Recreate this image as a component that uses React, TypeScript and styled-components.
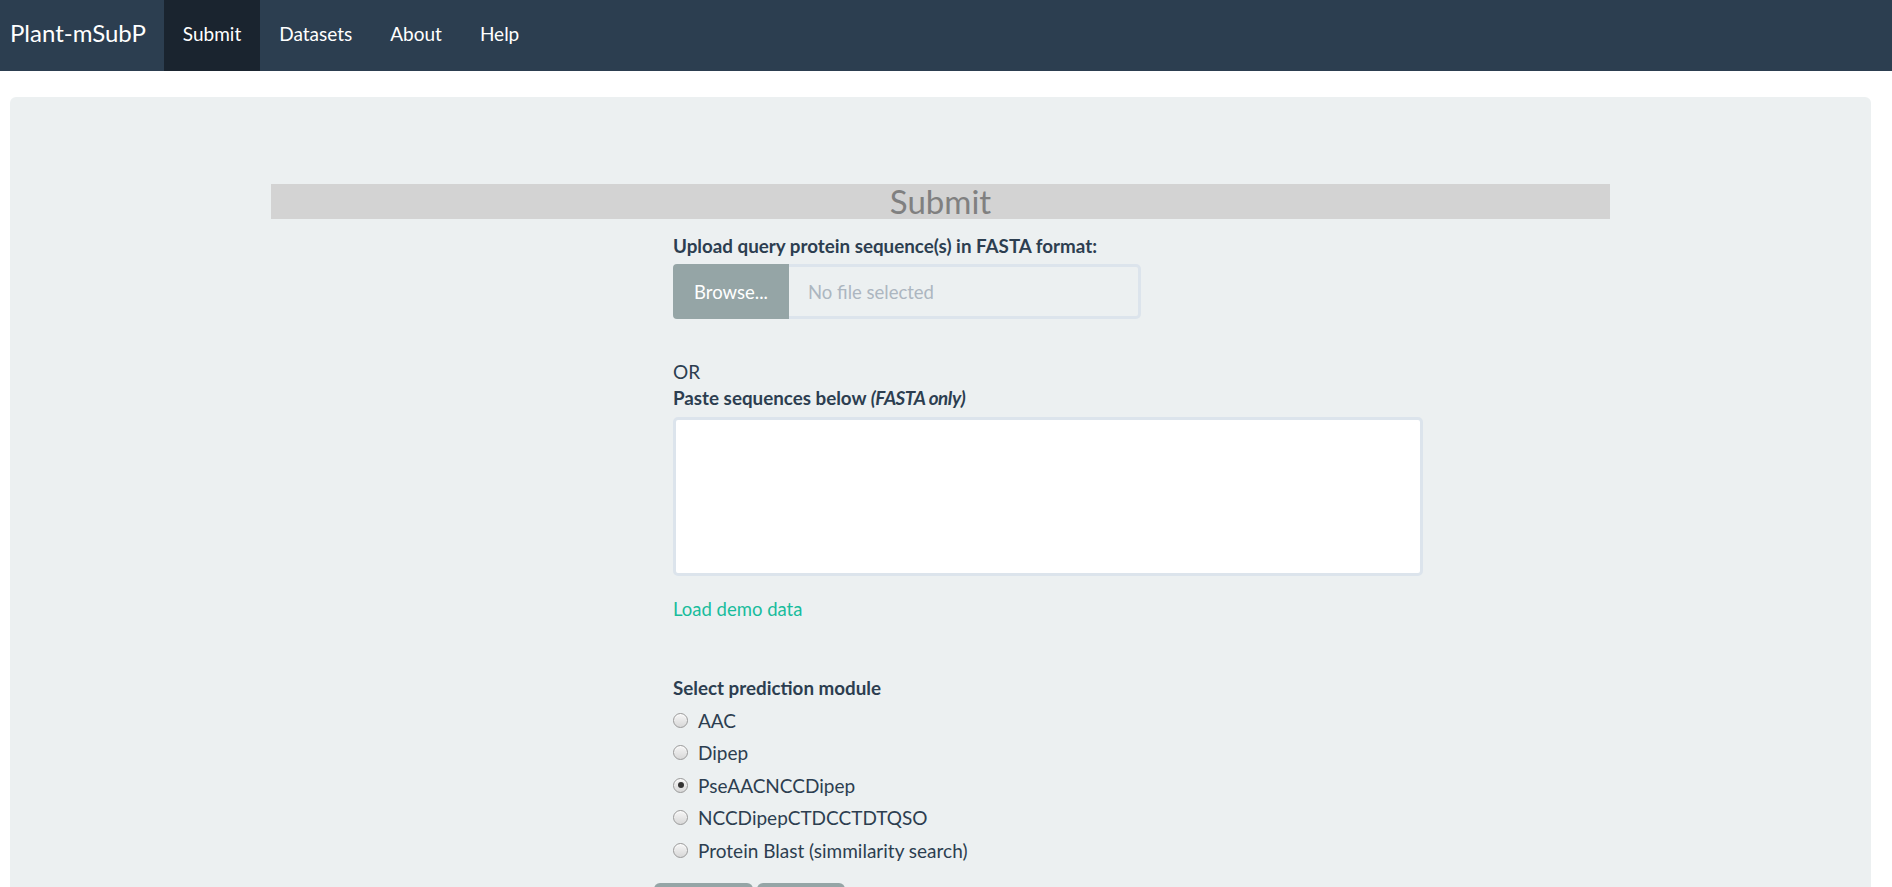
import React from "react";
import styled, { createGlobalStyle } from "styled-components";

const Global = createGlobalStyle`
  html, body { margin: 0; padding: 0; overflow: hidden; }
  body {
    background: #ffffff;
    font-family: Lato, "Open Sans", "Liberation Sans", sans-serif;
    color: #2c3e50;
    font-size: 19px;
  }
  * { box-sizing: border-box; }
`;

const NavBar = styled.nav`
  display: flex;
  align-items: stretch;
  height: 71px;
  background: #2c3e50;
`;

const Brand = styled.a`
  display: flex;
  align-items: center;
  padding: 0 18px 6px 10px;
  color: #ffffff;
  font-size: 24px;
  text-decoration: none;
`;

const NavLink = styled.a<{ $active?: boolean }>`
  display: flex;
  align-items: center;
  padding: 0 19px 4px;
  color: #ffffff;
  font-size: 19px;
  text-decoration: none;
  background: ${(p) => (p.$active ? "#1a242f" : "transparent")};
`;

const Panel = styled.main`
  margin: 26px 21px 0 10px;
  background: #ecf0f1;
  border-radius: 6px;
  padding-top: 87px;
  min-height: 900px;
`;

const Content = styled.div`
  width: 1339px;
  margin: 0 auto;
`;

const TitleBar = styled.h2`
  margin: 0;
  height: 35px;
  background: #d3d3d3;
  color: #808080;
  font-weight: 400;
  font-size: 33px;
  line-height: 35px;
  text-align: center;
`;

const Form = styled.div`
  margin-left: 402px;
  display: flex;
  flex-direction: column;
  align-items: flex-start;
`;

const Label = styled.label<{ $mt?: number }>`
  display: block;
  font-weight: 700;
  font-size: 18.8px;
  line-height: 26px;
  margin-top: ${(p) => p.$mt ?? 0}px;
`;

const Emphasis = styled.i`
  letter-spacing: -0.4px;
`;

const FileRow = styled.div`
  display: flex;
  margin-top: 5px;
  height: 55px;
  width: 468px;
`;

const BrowseButton = styled.span`
  display: flex;
  align-items: center;
  justify-content: center;
  width: 116px;
  background: #95a5a6;
  color: #ffffff;
  font-size: 18.5px;
  border-radius: 4px 0 0 4px;
`;

const FileName = styled.div`
  flex: 1;
  display: flex;
  align-items: center;
  padding-left: 19px;
  border: 3px solid #dce4ec;
  border-left: none;
  border-radius: 0 5px 5px 0;
  background: #ecf0f1;
  color: #acb6c0;
  font-size: 18.5px;
`;

const Plain = styled.div<{ $mt?: number }>`
  font-size: 19px;
  line-height: 26px;
  margin-top: ${(p) => p.$mt ?? 0}px;
`;

const TextArea = styled.textarea`
  margin-top: 6px;
  width: 750px;
  height: 159px;
  border: 3px solid #dce4ec;
  border-radius: 5px;
  background: #ffffff;
  resize: none;
  outline: none;
  font-family: inherit;
`;

const DemoLink = styled.a`
  margin-top: 20px;
  color: #18bc9c;
  font-size: 18.5px;
  line-height: 26px;
  text-decoration: none;
`;

const RadioList = styled.div`
  display: flex;
  flex-direction: column;
  margin-top: 3px;
`;

const RadioRow = styled.label`
  display: flex;
  align-items: center;
  height: 32.5px;
  font-size: 19px;
  gap: 10px;
`;

const RadioDot = styled.span<{ $checked?: boolean }>`
  position: relative;
  width: 15px;
  height: 15px;
  border-radius: 50%;
  border: 1px solid #9a9a9a;
  background: linear-gradient(#f6f6f6, #d8d8d8);
  box-shadow: inset 0 1px 1px rgba(255, 255, 255, 0.8);
  &::after {
    content: "";
    display: ${(p) => (p.$checked ? "block" : "none")};
    position: absolute;
    left: 3.5px;
    top: 3.5px;
    width: 6px;
    height: 6px;
    border-radius: 50%;
    background: #333;
  }
`;

const ButtonRow = styled.div`
  display: flex;
  gap: 4px;
  margin-top: 16px;
  margin-left: -19px;
`;

const ActionButton = styled.button<{ $w: number }>`
  width: ${(p) => p.$w}px;
  height: 46px;
  border: none;
  border-radius: 6px;
  background: #95a5a6;
  color: #ffffff;
  font-family: inherit;
  font-size: 18px;
  padding-top: 12px;
`;

const modules = [
  "AAC",
  "Dipep",
  "PseAACNCCDipep",
  "NCCDipepCTDCCTDTQSO",
  "Protein Blast (simmilarity search)",
];

export default function App() {
  return (
    <>
      <Global />
      <NavBar>
        <Brand href="#">Plant-mSubP</Brand>
        <NavLink href="#" $active>Submit</NavLink>
        <NavLink href="#">Datasets</NavLink>
        <NavLink href="#">About</NavLink>
        <NavLink href="#">Help</NavLink>
      </NavBar>
      <Panel>
        <Content>
          <TitleBar>Submit</TitleBar>
          <Form>
            <Label $mt={14}>Upload query protein sequence(s) in FASTA format:</Label>
            <FileRow>
              <BrowseButton>Browse...</BrowseButton>
              <FileName>No file selected</FileName>
            </FileRow>
            <Plain $mt={40}>OR</Plain>
            <Label $mt={0}>
              Paste sequences below <Emphasis>(FASTA only)</Emphasis>
            </Label>
            <TextArea />
            <DemoLink href="#">Load demo data</DemoLink>
            <Label $mt={53}>Select prediction module</Label>
            <RadioList>
              {modules.map((m) => (
                <RadioRow key={m}>
                  <RadioDot $checked={m === "PseAACNCCDipep"} />
                  {m}
                </RadioRow>
              ))}
            </RadioList>
            <ButtonRow>
              <ActionButton $w={99}>Submit</ActionButton>
              <ActionButton $w={88}>Reset</ActionButton>
            </ButtonRow>
          </Form>
        </Content>
      </Panel>
    </>
  );
}
